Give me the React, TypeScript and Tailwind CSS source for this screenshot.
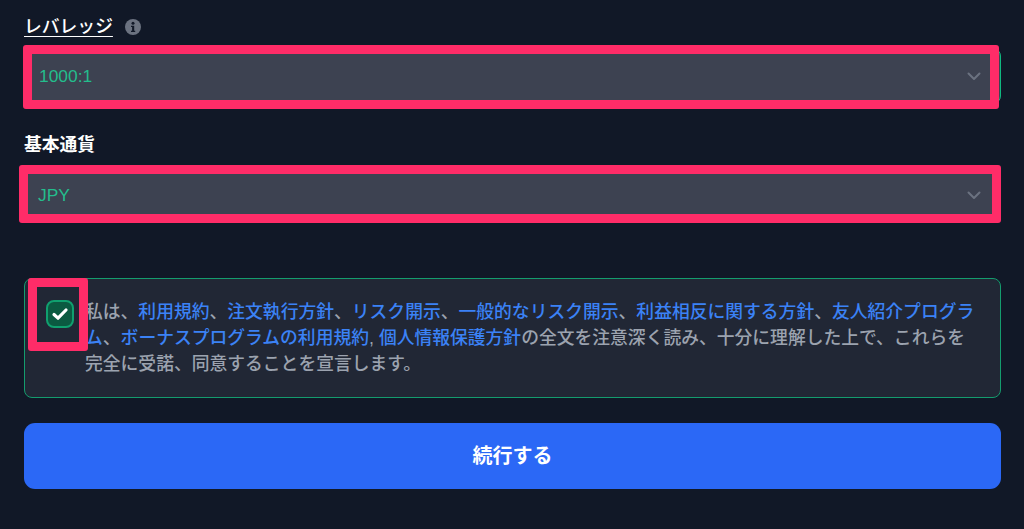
const FONT = "font-['Liberation_Sans','Noto_Sans_CJK_JP',sans-serif]";

function Chevron() {
  return (
    <svg width={16} height={16} viewBox="0 0 16 16" fill="none" stroke="#6b7280" strokeWidth={2} strokeLinecap="round" strokeLinejoin="round">
      <path d="M2.5 5.5 8 11l5.5-5.5" />
    </svg>
  );
}

function InfoIcon() {
  return (
    <svg width={16} height={16} viewBox="0 0 16 16">
      <circle cx={8} cy={8} r={8} fill="#6b7280" />
      <circle cx={8} cy={4.2} r={1.5} fill="#111827" />
      <path d="M6 6.8h3.2v5h1V13H6v-1.2h1.1V8H6z" fill="#111827" />
    </svg>
  );
}

function Select({ value, valueClass, markClass }: { value: string; valueClass: string; markClass: string }) {
  return (
    <div className="relative flex h-14 items-center justify-between rounded-lg border border-[#10b981] bg-[#3d4251] pl-[14px] pr-[18px]">
      <span className={`text-[17.4px] text-[#24bd8c] ${valueClass}`}>{value}</span>
      <Chevron />
      {/* pink annotation frame */}
      <div className={`absolute rounded-[3px] border-[9px] border-[#ff2c68] ${markClass}`} />
    </div>
  );
}

function Link({ children }: { children: React.ReactNode }) {
  return <span className="text-[#3b82f6]">{children}</span>;
}

export default function App() {
  return (
    <div className={`${FONT} flex h-[529px] flex-col overflow-hidden bg-[#111827] pl-6 pr-[23px] pt-[13px]`}>
      <div className="flex h-[26px] items-center gap-3 pt-px font-medium">
        <span className="text-[17.8px] leading-[22px] text-white underline decoration-1 underline-offset-[3px]">レバレッジ</span>
        <InfoIcon />
      </div>
      <div className="mt-[9px]">
        <Select value="1000:1" valueClass="" markClass="-left-[2px] right-[1px] -top-[4px] -bottom-[6px]" />
      </div>

      <div className="mt-[28px] flex h-[26px] items-center text-[17.8px] font-bold text-white">基本通貨</div>
      <div className="mt-[9px]">
        <Select value="JPY" valueClass="-ml-px" markClass="-left-[6px] -right-[1px] -top-[3px] -bottom-px" />
      </div>

      <div className="relative mt-[55px] flex h-[120px] items-start gap-[11px] rounded-lg border border-[#149c6e] bg-[#212735] pl-[21px] pt-5">
        <div className="mt-px flex h-7 w-7 shrink-0 items-center justify-center rounded-lg border-2 border-[#10a06f] bg-[#0b5a41]">
          <svg width={18} height={18} viewBox="0 0 18 18" fill="none" stroke="#fff" strokeWidth={3.2} strokeLinecap="round" strokeLinejoin="round">
            <path d="M3 9.5 7 13.2 15 5" />
          </svg>
        </div>
        <p className="w-[892px] text-[17.8px] font-medium leading-[26px] text-[#9ca3af]">
          私は、<Link>利用規約</Link>、<Link>注文執行方針</Link>、<Link>リスク開示</Link>、<Link>一般的なリスク開示</Link>、<Link>利益相反に関する方針</Link>、<Link>友人紹介プログラム</Link>、<Link>ボーナスプログラムの利用規約</Link>, <Link>個人情報保護方針</Link>の全文を注意深く読み、十分に理解した上で、これらを完全に受諾、同意することを宣言します。
        </p>
        <div className="absolute -top-px left-[3px] h-[73px] w-[60px] rounded-[3px] border-[9px] border-[#ff2c68]" />
      </div>

      <button className="mt-[25px] flex h-[66px] shrink-0 items-center justify-center rounded-[11px] bg-[#2b68f6] text-[20px] font-bold text-white">
        続行する
      </button>
    </div>
  );
}
